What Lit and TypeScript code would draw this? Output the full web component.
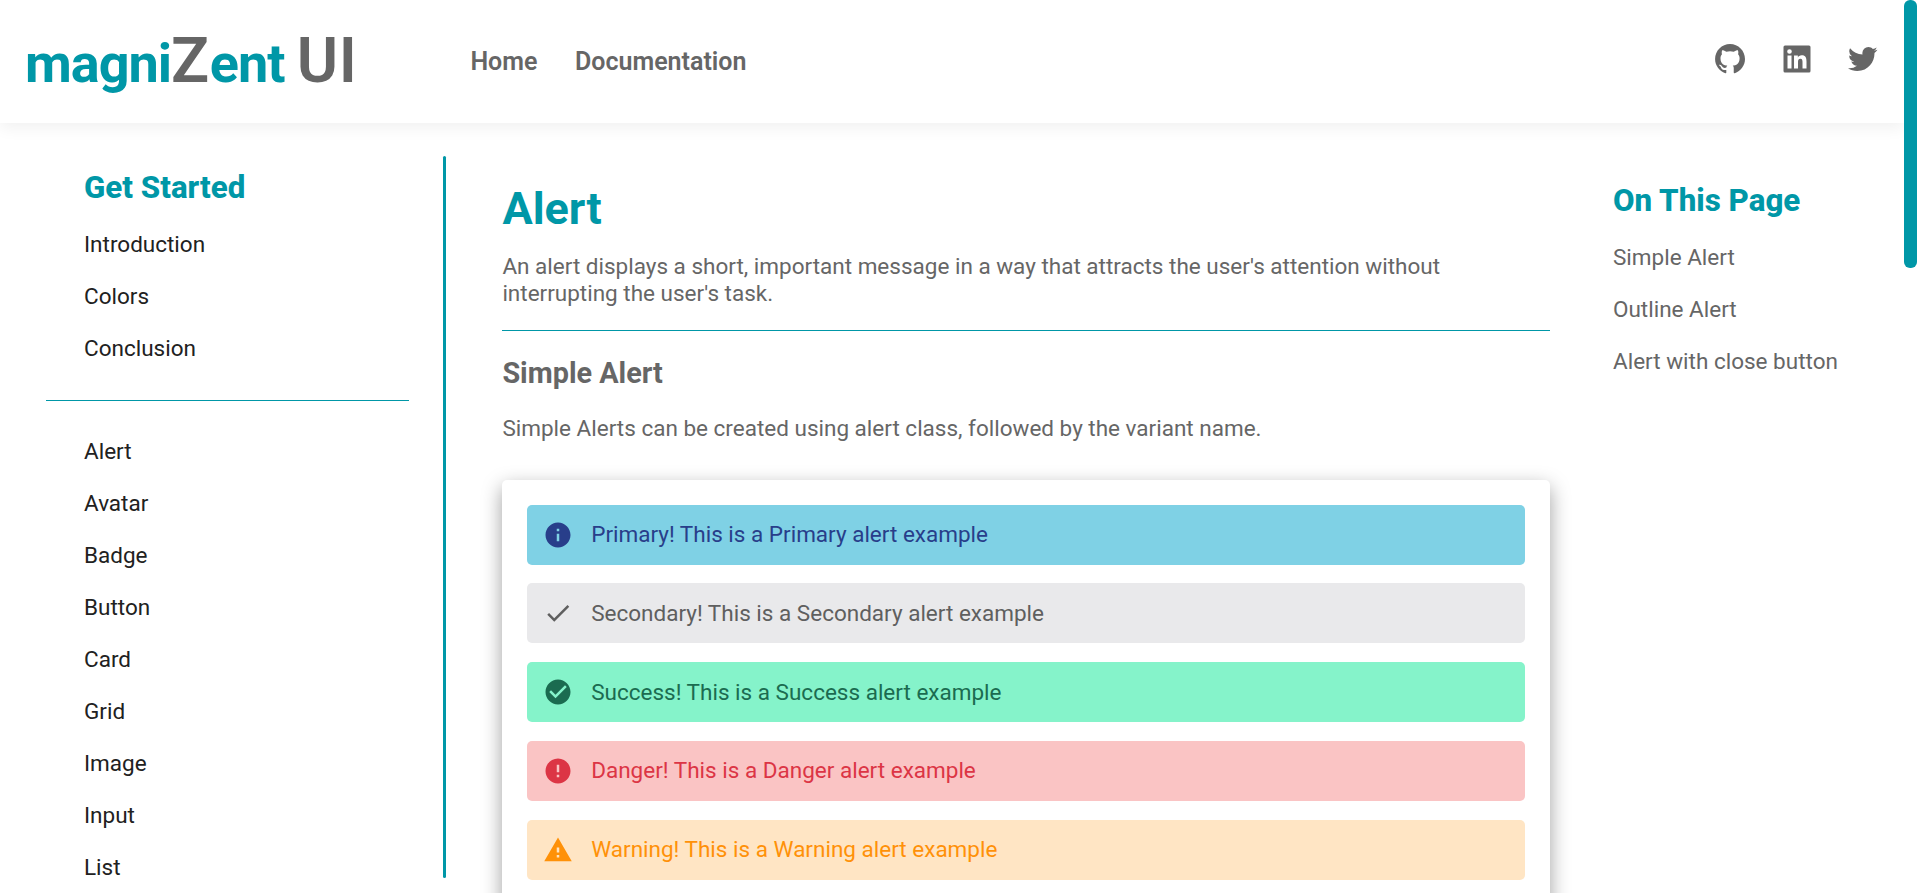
import { LitElement, html, css, svg } from "lit";

const ICONS = {
  github:
    "M12.026 2c-5.509 0-9.974 4.465-9.974 9.974 0 4.406 2.857 8.145 6.821 9.465.499.09.679-.217.679-.481 0-.237-.008-.865-.011-1.696-2.775.602-3.361-1.338-3.361-1.338-.452-1.152-1.107-1.459-1.107-1.459-.905-.619.069-.605.069-.605 1.002.07 1.527 1.028 1.527 1.028.89 1.524 2.336 1.084 2.902.829.091-.645.351-1.085.635-1.334-2.214-.251-4.542-1.107-4.542-4.93 0-1.087.389-1.979 1.024-2.675-.101-.253-.446-1.268.099-2.64 0 0 .837-.269 2.742 1.021a9.582 9.582 0 0 1 2.496-.336 9.554 9.554 0 0 1 2.496.336c1.906-1.291 2.742-1.021 2.742-1.021.545 1.372.203 2.387.099 2.64.64.696 1.024 1.587 1.024 2.675 0 3.833-2.33 4.675-4.552 4.922.355.308.675.916.675 1.846 0 1.334-.012 2.41-.012 2.737 0 .267.178.577.687.479C19.146 20.115 22 16.379 22 11.974 22 6.465 17.535 2 12.026 2z",
  linkedin:
    "M20 3H4a1 1 0 0 0-1 1v16a1 1 0 0 0 1 1h16a1 1 0 0 0 1-1V4a1 1 0 0 0-1-1zM8.339 18.337H5.667v-8.59h2.672v8.59zM7.003 8.574a1.548 1.548 0 1 1 0-3.096 1.548 1.548 0 0 1 0 3.096zm11.335 9.763h-2.669V14.16c0-.996-.018-2.277-1.388-2.277-1.39 0-1.601 1.086-1.601 2.207v4.248h-2.667v-8.59h2.56v1.174h.037c.355-.675 1.227-1.387 2.524-1.387 2.704 0 3.203 1.778 3.203 4.092v4.71z",
  twitter:
    "M19.633 7.997c.013.175.013.349.013.523 0 5.325-4.053 11.461-11.46 11.461-2.282 0-4.402-.661-6.186-1.809.324.037.636.05.973.05a8.07 8.07 0 0 0 5.001-1.721 4.036 4.036 0 0 1-3.767-2.793c.249.037.499.062.761.062.361 0 .724-.05 1.061-.137a4.027 4.027 0 0 1-3.23-3.953v-.05c.537.299 1.16.486 1.82.511a4.022 4.022 0 0 1-1.796-3.354c0-.748.199-1.434.548-2.032a11.457 11.457 0 0 0 8.306 4.215c-.062-.3-.1-.611-.1-.923a4.026 4.026 0 0 1 4.028-4.028c1.16 0 2.207.486 2.943 1.272a7.957 7.957 0 0 0 2.556-.973 4.02 4.02 0 0 1-1.771 2.22 8.073 8.073 0 0 0 2.319-.624 8.645 8.645 0 0 1-2.019 2.083z",
  info: "M12 2C6.48 2 2 6.48 2 12s4.48 10 10 10 10-4.48 10-10S17.52 2 12 2zm1 15h-2v-6h2v6zm0-8h-2V7h2v2z",
  check: "M9 16.17L4.83 12l-1.42 1.41L9 19 21 7l-1.41-1.41z",
  checkCircle:
    "M12 2C6.48 2 2 6.48 2 12s4.48 10 10 10 10-4.48 10-10S17.52 2 12 2zm-2 15l-5-5 1.41-1.41L10 14.17l7.59-7.59L19 8l-9 9z",
  error: "M12 2C6.48 2 2 6.48 2 12s4.48 10 10 10 10-4.48 10-10S17.52 2 12 2zm1 15h-2v-2h2v2zm0-4h-2V7h2v6z",
  warning: "M1 21h22L12 2 1 21zm12-3h-2v-2h2v2zm0-4h-2v-4h2v4z",
};

const icon = (name: keyof typeof ICONS) =>
  html`<svg class="icon" viewBox="0 0 24 24" aria-hidden="true">${svg`<path d=${ICONS[name]}></path>`}</svg>`;

const START = ["Introduction", "Colors", "Conclusion"];
const COMPONENTS = ["Alert", "Avatar", "Badge", "Button", "Card", "Grid", "Image", "Input", "List"];
const ON_PAGE = ["Simple Alert", "Outline Alert", "Alert with close button"];
const ALERTS: [string, keyof typeof ICONS][] = [
  ["Primary", "info"],
  ["Secondary", "check"],
  ["Success", "checkCircle"],
  ["Danger", "error"],
  ["Warning", "warning"],
];

class AppRoot extends LitElement {
  static styles = css`
    :host {
      display: flex;
      height: 893px;
      overflow: hidden;
      background: #fff;
      color: #666;
      font: 400 22.5px/27px Roboto, "Liberation Sans", sans-serif;
    }
    * { box-sizing: border-box; margin: 0; padding: 0; }
    ul { list-style: none; }
    .page { flex: 1; min-width: 0; display: flex; flex-direction: column; }
    .icon { display: block; fill: currentColor; flex: none; }
    header {
      flex: none;
      height: 123px;
      display: flex;
      align-items: flex-start;
      padding: 0 23px 0 25px;
      box-shadow: 0 5px 15px rgba(0, 0, 0, 0.06);
    }
    .logo {
      width: 445.4px;
      padding-top: 24px;
      font-size: 54px;
      font-weight: 700;
      line-height: 74px;
      letter-spacing: -1px;
      color: #0097a7;
      white-space: nowrap;
    }
    .logo span { font-size: 63px; font-weight: 600; letter-spacing: 0.5px; color: #666; }
    nav { flex: 1; display: flex; gap: 37.6px; padding-top: 47px; font-size: 25px; font-weight: 600; line-height: 30px; }
    .social { display: flex; gap: 30.5px; padding-top: 41.4px; }
    .social .icon { width: 36px; height: 36px; }
    .body { flex: 1; min-height: 0; display: flex; }
    aside {
      flex: none;
      width: 400px;
      height: 722px;
      margin: 33px 0 0 46px;
      display: flex;
    }
    .menu { width: 363px; margin-right: 34px; padding-top: 13px; }
    .rail { width: 3px; border-radius: 2px; background: #0097a7; }
    h2 { font-size: 31.3px; font-weight: 800; line-height: 38px; color: #0097a7; }
    .menu h2 { padding-left: 38px; }
    .menu ul { padding: 12px 0 0 38px; color: #212121; }
    li { height: 52px; padding-top: 12px; }
    .menu hr { margin-top: 25px; }
    hr { border: 0; height: 1px; background: #0097a7; }
    .menu hr + ul { padding-top: 25px; }
    main { flex: none; width: 1048px; margin-left: 56.4px; padding-top: 59px; }
    h1 { font-size: 45px; font-weight: 700; line-height: 54px; color: #0097a7; }
    .lead { margin: 17px 0 23px; }
    h3 { margin-top: 25px; font-size: 28.8px; font-weight: 700; line-height: 34px; }
    .note { margin-top: 25px; }
    .card {
      margin-top: 37.6px;
      height: 440px;
      padding: 25px;
      border-radius: 5px;
      background: #fff;
      box-shadow: 0 7px 20px rgba(0, 0, 0, 0.38);
    }
    .alert {
      height: 60px;
      margin-bottom: 18.75px;
      display: flex;
      align-items: center;
      gap: 18.5px;
      padding: 0 15.3px;
      border-radius: 5px;
    }
    .alert .icon { width: 30px; height: 30px; }
    .primary { background: #7fd1e5; color: #283e8a; }
    .secondary { background: #e9e9eb; color: #5f5f5f; }
    .success { background: #85f3ca; color: #1b6b50; }
    .danger { background: #fac4c4; color: #dc3545; }
    .warning { background: #ffe5c4; color: #ff9108; }
    .toc { padding: 59px 0 0 62.6px; }
    .toc ul { padding-top: 12px; }
    .scrollbar { flex: none; width: 13px; position: relative; background: #fff; }
    .thumb { height: 268px; border-radius: 6px; background: #0097a7; }
  `;

  render() {
    return html`
      <div class="page">
        <header>
          <div class="logo">magni<span>Z</span>ent <span>UI</span></div>
          <nav><a>Home</a><a>Documentation</a></nav>
          <div class="social">${icon("github")}${icon("linkedin")}${icon("twitter")}</div>
        </header>
        <div class="body">
          <aside>
            <div class="menu">
              <h2>Get Started</h2>
              <ul>${START.map((t) => html`<li>${t}</li>`)}</ul>
              <hr />
              <ul>${COMPONENTS.map((t) => html`<li>${t}</li>`)}</ul>
            </div>
            <div class="rail"></div>
          </aside>
          <main>
            <h1>Alert</h1>
            <p class="lead">An alert displays a short, important message in a way that attracts the user's attention without interrupting the user's task.</p>
            <hr />
            <h3>Simple Alert</h3>
            <p class="note">Simple Alerts can be created using alert class, followed by the variant name.</p>
            <section class="card">
              ${ALERTS.map(
                ([name, glyph]) => html`<div class="alert ${name.toLowerCase()}">
                  ${icon(glyph)}<p>${name}! This is a ${name} alert example</p>
                </div>`
              )}
            </section>
          </main>
          <section class="toc">
            <h2>On This Page</h2>
            <ul>${ON_PAGE.map((t) => html`<li>${t}</li>`)}</ul>
          </section>
        </div>
      </div>
      <div class="scrollbar"><div class="thumb"></div></div>
    `;
  }
}
customElements.define("app-root", AppRoot);
